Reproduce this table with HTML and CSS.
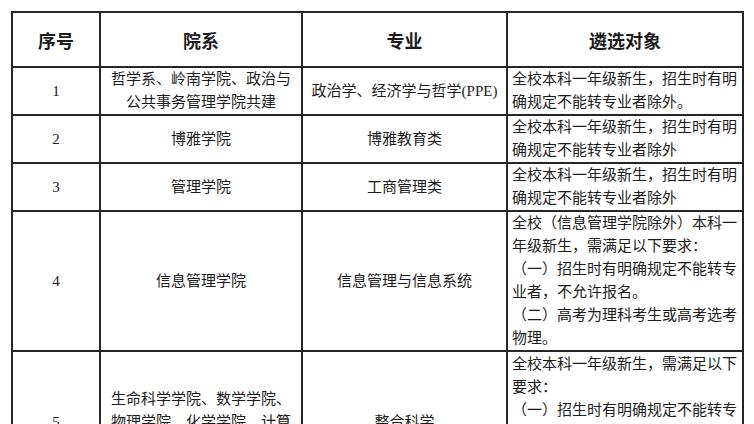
FILE: index.html
```
<!DOCTYPE html>
<html lang="zh-CN">
<head>
<meta charset="utf-8">
<title>遴选对象</title>
<link rel="stylesheet" href="styles.css">
</head>
<body>
<table class="grid">
  <colgroup>
    <col class="c-no">
    <col class="c-dept">
    <col class="c-major">
    <col class="c-who">
  </colgroup>
  <thead>
    <tr class="head">
      <th>序号</th>
      <th>院系</th>
      <th>专业</th>
      <th>遴选对象</th>
    </tr>
  </thead>
  <tbody>
    <tr class="r1">
      <td class="num">1</td>
      <td class="dept">哲学系、岭南学院、政治与公共事务管理学院共建</td>
      <td class="major">政治学、经济学与哲学(PPE)</td>
      <td class="who"><p>全校本科一年级新生，招生时有明确规定不能转专业者除外。</p></td>
    </tr>
    <tr class="r2">
      <td class="num">2</td>
      <td class="dept">博雅学院</td>
      <td class="major">博雅教育类</td>
      <td class="who"><p>全校本科一年级新生，招生时有明确规定不能转专业者除外</p></td>
    </tr>
    <tr class="r3">
      <td class="num">3</td>
      <td class="dept">管理学院</td>
      <td class="major">工商管理类</td>
      <td class="who"><p>全校本科一年级新生，招生时有明确规定不能转专业者除外</p></td>
    </tr>
    <tr class="r4">
      <td class="num">4</td>
      <td class="dept">信息管理学院</td>
      <td class="major">信息管理与信息系统</td>
      <td class="who">
        <p>全校（信息管理学院除外）本科一年级新生，需满足以下要求：</p>
        <p>（一）招生时有明确规定不能转专业者，不允许报名。</p>
        <p>（二）高考为理科考生或高考选考物理。</p>
      </td>
    </tr>
    <tr class="r5">
      <td class="num">5</td>
      <td class="dept">生命科学学院、数学学院、物理学院、化学学院、计算机学院共建</td>
      <td class="major">整合科学</td>
      <td class="who">
        <p>全校本科一年级新生，需满足以下要求：</p>
        <p>（一）招生时有明确规定不能转专业者，不允许报名。</p>
        <p>（二）高考为理科考生或高考选考物理。</p>
      </td>
    </tr>
  </tbody>
</table>
</body>
</html>
```
FILE: styles.css
```
html, body {
  margin: 0;
  padding: 0;
  background: #ffffff;
}

body {
  padding: 11px 0 0 11px;
  font-family: "Liberation Serif", "Noto Sans CJK SC", serif;
  color: #1c1c1c;
}

.grid {
  border-collapse: collapse;
  table-layout: fixed;
  width: 731px;
}

.c-no { width: 88px; }
.c-dept { width: 202px; }
.c-major { width: 205px; }
.c-who { width: 236px; }

.grid th,
.grid td {
  border: 2px solid #262626;
  padding: 0;
  vertical-align: middle;
}

.head th {
  height: 52px;
  font-size: 18px;
  font-weight: bold;
  text-align: center;
  padding-top: 1px;
}

.grid td {
  font-size: 15px;
  line-height: 23px;
  text-align: center;
}

.r1 td, .r2 td { height: 43px; }
.r3 td { height: 41px; }
.r4 td { height: 133px; }
.r5 td { height: 140px; }

.grid td.dept {
  padding: 0 8px;
}

.num {
  font-size: 15px;
}

.grid td.who {
  text-align: left;
  padding: 0 3px 0 4px;
}

.who p {
  margin: 0;
}
```
